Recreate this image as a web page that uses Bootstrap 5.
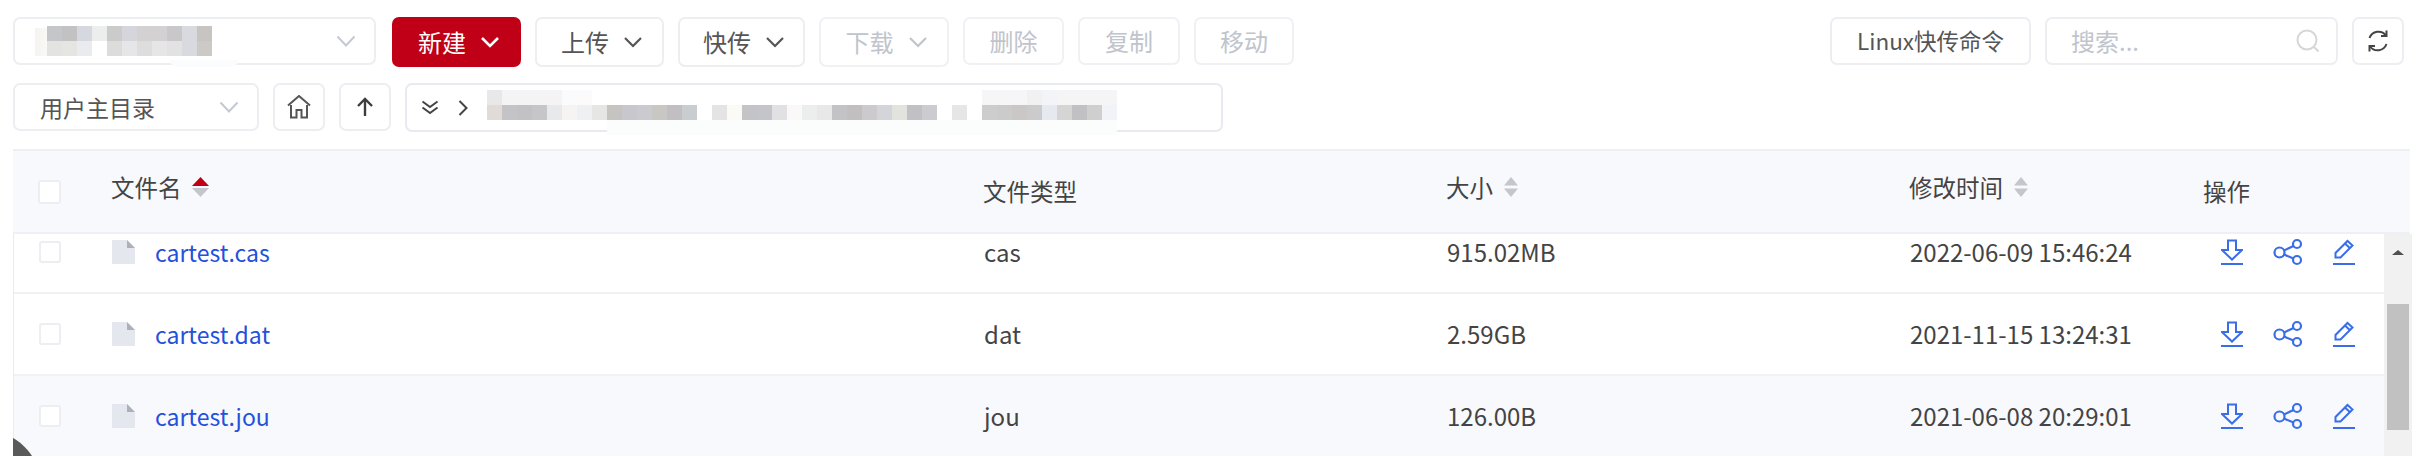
<!DOCTYPE html>
<html lang="zh-CN">
<head>
<meta charset="utf-8">
<title>文件管理</title>
<link href="https://cdn.jsdelivr.net/npm/bootstrap@5.3.0/dist/css/bootstrap.min.css" rel="stylesheet">
<style>
html,body{height:460px;overflow:hidden;background:#fff}
body{font-family:"Noto Sans CJK SC","Liberation Sans",sans-serif;font-size:24px;color:#444}
.page{padding:17px 17px 0 13px}
.bar{align-items:flex-start}
.tb{--bs-btn-border-color:#eceef2;height:48px;padding:0;border:2px solid #eceef2;border-radius:7px;font-size:24px;color:#555;background:#fff;display:flex;align-items:center;justify-content:center;gap:14px}
.tb.tall{height:50px;padding-left:5px}
.tb.off,.tb.off:disabled{color:#c0c4cc;opacity:1;border-color:#f0f1f5;background:#fff}
.tb.new{background:#c00017;border-color:#c00017;color:#fff}
.tb.w-linux{font-size:22.5px}
.w-new,.w-up{width:129px}.w-fast{width:127px}.w-down{width:130px}.w-del{width:101px}.w-copy{width:102px}.w-move{width:100px}
.w-linux{width:201px}.w-refresh{width:52px}.w-home{width:52px}
.g16{margin-left:16px}.g14{margin-left:14px}
.sel{height:48px;border:2px solid #eceef2;border-radius:7px;background:#fff;display:flex;align-items:center;justify-content:space-between}
.sel-a{width:363px;padding:0 18px 0 20px;position:relative}
.sel-b{width:246px;padding:0 18px 0 25px;font-size:23px;color:#555}
.row2{margin-top:16px}
.pathbox{width:818px;height:49px;border:2px solid #e9eaf0;border-radius:7px;display:flex;align-items:center;padding-left:14px;gap:19px}
.blur-a{width:192px;height:36px;margin-top:6px;flex:none;background:
 linear-gradient(90deg,#c5c6ca 0 15px,#c2c2c3 0 30px,#d5d8df 0 45px,#eceeed 0 60px,#cbcbcb 0 75px,#d5d6db 0 90px,#d3d1d1 0 120px,#c8c8ca 0 135px,#d9dadf 0 150px,#c7c4c1 0 165px) 12px 0/165px 15px no-repeat,
 linear-gradient(90deg,#e3e4e2 0 15px,#e5e6e2 0 30px,#e9ebef 0 45px,#fff 0 60px,#dcdcdc 0 75px,#e6e6e8 0 90px,#dedddd 0 105px,#e6e6e6 0 120px,#e2e2e2 0 135px,#d9dadf 0 150px,#cccac6 0 165px) 12px 15px/165px 15px no-repeat,
 linear-gradient(90deg,#f6f4f1,#f9f9f7) 0 2px/12px 28px no-repeat}
.wash{position:absolute;left:155px;top:41px;width:68px;height:7px;background:#fbfcfe;border-radius:0 0 12px 12px}
.blur-b{width:630px;height:45px;margin-top:5px;flex:none;align-self:flex-start;background:
 linear-gradient(90deg,#e0dbd6 0 15px,#c4c4c8 0 30px,#c2c1c3 0 45px,#c6c6ca 0 60px,#e8e9eb 0 75px,#f5f4f2 0 90px,#eff0f2 0 105px,#e6e6e4 0 120px,#c6c4c1 0 135px,#c8c7cd 0 150px,#cbcbcf 0 165px,#c9c7c4 0 180px,#c2bfc2 0 195px,#cacdd0 0 210px,#fff 0 225px,#e4e4e4 0 240px,#fbfaf6 0 255px,#c4c4c8 0 270px,#c4c5cb 0 285px,#e1e1e4 0 300px,#faf9f7 0 315px,#eceded 0 330px,#e8e8e9 0 345px,#c3c3c6 0 360px,#c1bfc0 0 375px,#cdcacd 0 390px,#d4d5da 0 405px,#e2e2de 0 420px,#c1c0c4 0 435px,#ccccd0 0 450px,#fff 0 465px,#e6e6e6 0 480px,#fff 0 495px,#cdcdcd 0 510px,#cbcbcb 0 525px,#cbc7c6 0 540px,#cbcbcd 0 555px,#e6e9f0 0 570px,#d5d5d3 0 585px,#c1c1c4 0 600px,#cfcfcd 0 615px,#f2f3f8 0 630px) 0 15px/630px 15px no-repeat,
 linear-gradient(90deg,#e8e8e8 0 15px,#f4f4f4 0 75px,#fbfbfc 0 105px,#fff 0 495px,#f6f6f6 0 540px,#f1f1f1 0 555px,#f3f4f8 0 570px,#f5f5f5 0 615px) 0 0/630px 15px no-repeat,
 linear-gradient(90deg,transparent 0 120px,#fbfcfc 0 510px) 0 30px/630px 15px no-repeat}
.srch{width:293px;height:48px;border:2px solid #eceef2;border-radius:7px;display:flex;align-items:center;padding:0 16px 0 24px}
.srch input{border:0;outline:0;padding:0;min-width:0;flex:1;font-size:24px;background:transparent}
.srch input::placeholder{color:#c0c4cc}
.tbl-wrap{margin-top:17px;position:relative;width:2399px}
.tbl{table-layout:fixed;margin:0;--bs-table-bg:transparent;--bs-table-color:#444;border-collapse:separate;border-spacing:0}
.tbl td,.tbl th{padding:0 0 0 13px;vertical-align:middle;font-weight:400;border:0;line-height:1.4}
.tbl td:first-child,.tbl th:first-child{padding-left:25px}
.c1{width:85px}.c2{width:872px}.c3,.c4{width:463px}.c5{width:294px}.c6{width:193px}.c7{width:27px}
.head{width:2397px;background:#f8f9fd;border-top:2px solid #eeeff2}
.head th{height:83px;border-bottom:2px solid #eef0f5;color:#444;font-size:23.5px}
.head .sorted{padding-bottom:8px}
.sortwrap{display:inline-flex;align-items:center;gap:10px}
.view{height:222px;overflow:hidden;display:flex}
.clip{width:2371px;height:222px;overflow:hidden;border-left:1px solid #e9ebf0;flex:none}
.body{width:2370px;margin-top:-22px}
.body td{height:82px;border-bottom:2px solid #f0f1f5;letter-spacing:0}
.body tr.alt{background:#f8f9fd}
.ck{display:block;width:22px;height:22px;border:2px solid #eceef2;border-radius:3px;background:#fff}
.head .ck{width:23px;height:24px}
.fname{display:flex;align-items:center;gap:20px}
.fname a{color:#2450dc;text-decoration:none;font-size:23px}
.acts{display:flex;gap:30px;padding-left:17px;align-items:center}
.sb{width:28px;height:222px;background:#f1f1f1;flex:none;margin-left:0;padding:0 3px}
.sb-up{display:block;height:70px}
.sb-th{height:126px;background:#c1c1c1}
.corner{position:absolute;left:0;bottom:0}
</style>
</head>
<body>
<div class="page">
  <div class="d-flex bar">
    <div class="sel sel-a">
      <div class="blur-a"></div><div class="wash"></div>
      <svg width="20" height="12" viewBox="0 0 20 12"><path d="M1.5 1.5 10 10.5 18.5 1.5" fill="none" stroke="#c4cad3" stroke-width="2"/></svg>
    </div>
    <button type="button" class="btn tb tall new w-new g16">新建<svg width="20" height="12" viewBox="0 0 20 12"><path d="M2 2l8 8 8-8" fill="none" stroke="#fff" stroke-width="2.6"/></svg></button>
    <button type="button" class="btn tb tall w-up g14">上传<svg width="20" height="12" viewBox="0 0 20 12"><path d="M2 2l8 8 8-8" fill="none" stroke="#555" stroke-width="2.2"/></svg></button>
    <button type="button" class="btn tb tall w-fast g14">快传<svg width="20" height="12" viewBox="0 0 20 12"><path d="M2 2l8 8 8-8" fill="none" stroke="#555" stroke-width="2.2"/></svg></button>
    <button type="button" class="btn tb tall off w-down g14" disabled>下载<svg width="20" height="12" viewBox="0 0 20 12"><path d="M2 2l8 8 8-8" fill="none" stroke="#c0c4cc" stroke-width="2.2"/></svg></button>
    <button type="button" class="btn tb off w-del g14" disabled>删除</button>
    <button type="button" class="btn tb off w-copy g14" disabled>复制</button>
    <button type="button" class="btn tb off w-move g14" disabled>移动</button>
    <button type="button" class="btn tb w-linux ms-auto">Linux快传命令</button>
    <div class="srch g14">
      <input type="text" placeholder="搜索..." aria-label="搜索">
      <svg width="24" height="24" viewBox="0 0 24 24"><circle cx="11" cy="11" r="9.5" fill="none" stroke="#d6d6d6" stroke-width="2"/><path d="M18 18l4.5 4.5" stroke="#d6d6d6" stroke-width="2"/></svg>
    </div>
    <button type="button" class="btn tb w-refresh g14" aria-label="刷新">
      <svg width="24" height="24" viewBox="0 0 24 24" fill="none" stroke="#444" stroke-width="2"><path d="M3.5 9A9.5 9.5 0 0 1 20 6.5"/><path d="M20.5 15A9.5 9.5 0 0 1 4 17.5"/><path d="M20.5 1.5v5.5h-5.5"/><path d="M3.5 22.5V17h5.5"/></svg>
    </button>
  </div>
  <div class="d-flex bar row2">
    <div class="sel sel-b">用户主目录
      <svg width="20" height="12" viewBox="0 0 20 12"><path d="M1.5 1.5 10 10.5 18.5 1.5" fill="none" stroke="#c4cad3" stroke-width="2"/></svg>
    </div>
    <button type="button" class="btn tb w-home g14" aria-label="主目录">
      <svg width="24" height="24" viewBox="0 0 24 24" fill="none" stroke="#555" stroke-width="2"><path d="M1 10.5 12 1l11 9.5"/><path d="M4 10v12.5h5.5V15h5v7.5H20V10"/></svg>
    </button>
    <button type="button" class="btn tb w-home g14" aria-label="上一级">
      <svg width="16" height="20" viewBox="0 0 16 20" fill="none" stroke="#3d3d3d" stroke-width="2.4"><path d="M8 19V2"/><path d="M1 9l7-7 7 7"/></svg>
    </button>
    <div class="pathbox g14">
      <svg width="18" height="15" viewBox="0 0 18 15" fill="none" stroke="#444" stroke-width="2"><path d="M1.5 1.5 9 7 16.5 1.5"/><path d="M1.5 7.5 9 13 16.5 7.5"/></svg>
      <svg width="10" height="16" viewBox="0 0 10 16" fill="none" stroke="#444" stroke-width="2"><path d="M1.5 1 8.5 8 1.5 15"/></svg>
      <div class="blur-b"></div>
    </div>
  </div>
  <div class="tbl-wrap">
    <table class="table tbl head">
      <colgroup><col class="c1"><col class="c2"><col class="c3"><col class="c4"><col class="c5"><col class="c6"><col class="c7"></colgroup>
      <thead><tr>
        <th><span class="ck"></span></th>
        <th class="sorted"><span class="sortwrap">文件名<svg width="17" height="20" viewBox="0 0 17 20"><path d="M8.5 0 17 9H0z" fill="#c00017"/><path d="M0 11h17l-8.5 9z" fill="#c3c6cc"/></svg></span></th>
        <th>文件类型</th>
        <th class="sorted"><span class="sortwrap">大小<svg width="16" height="20" viewBox="0 0 16 20"><path d="M8 0l7 8.5H1z" fill="#c3c6cc"/><path d="M1 11.5h14L8 20z" fill="#c3c6cc"/></svg></span></th>
        <th class="sorted"><span class="sortwrap">修改时间<svg width="16" height="20" viewBox="0 0 16 20"><path d="M8 0l7 8.5H1z" fill="#c3c6cc"/><path d="M1 11.5h14L8 20z" fill="#c3c6cc"/></svg></span></th>
        <th>操作</th>
        <th></th>
      </tr></thead>
    </table>
    <div class="view">
      <div class="clip">
        <table class="table tbl body">
          <colgroup><col class="c1"><col class="c2"><col class="c3"><col class="c4"><col class="c5"><col class="c6"></colgroup>
          <tbody>
            <tr>
              <td><span class="ck"></span></td>
              <td><div class="fname"><svg width="23" height="24" viewBox="0 0 23 24"><path d="M0 0h15l8 8v16H0z" fill="#e4e8ee"/><path d="M15 0l8 8h-8z" fill="#aab1bb"/></svg><a href="#">cartest.cas</a></div></td>
              <td>cas</td><td>915.02MB</td><td>2022-06-09 15:46:24</td>
              <td><div class="acts">
                <svg width="22" height="26" viewBox="0 0 22 26" fill="none" stroke="#3a6ee8" stroke-width="2"><path d="M7 1.5h8V11h6L11 20.5 1 11h6z"/><path d="M0 25h22"/></svg>
                <svg width="30" height="28" viewBox="0 0 30 28" fill="none" stroke="#3a6ee8" stroke-width="2.2"><circle cx="6.5" cy="14.5" r="5"/><circle cx="24" cy="6" r="4"/><circle cx="24" cy="22" r="4"/><path d="M11 12.5 20.5 8M11 16.5 20.5 20.5"/></svg>
                <svg width="22" height="26" viewBox="0 0 22 26" fill="none" stroke="#3a6ee8" stroke-width="2"><path d="M2.5 18.5V14L14.5 2l5 4.5-12 12z"/><path d="M12 4.5l5 4.8"/><path d="M0 25h22"/></svg>
              </div></td>
            </tr>
            <tr>
              <td><span class="ck"></span></td>
              <td><div class="fname"><svg width="23" height="24" viewBox="0 0 23 24"><path d="M0 0h15l8 8v16H0z" fill="#e4e8ee"/><path d="M15 0l8 8h-8z" fill="#aab1bb"/></svg><a href="#">cartest.dat</a></div></td>
              <td>dat</td><td>2.59GB</td><td>2021-11-15 13:24:31</td>
              <td><div class="acts">
                <svg width="22" height="26" viewBox="0 0 22 26" fill="none" stroke="#3a6ee8" stroke-width="2"><path d="M7 1.5h8V11h6L11 20.5 1 11h6z"/><path d="M0 25h22"/></svg>
                <svg width="30" height="28" viewBox="0 0 30 28" fill="none" stroke="#3a6ee8" stroke-width="2.2"><circle cx="6.5" cy="14.5" r="5"/><circle cx="24" cy="6" r="4"/><circle cx="24" cy="22" r="4"/><path d="M11 12.5 20.5 8M11 16.5 20.5 20.5"/></svg>
                <svg width="22" height="26" viewBox="0 0 22 26" fill="none" stroke="#3a6ee8" stroke-width="2"><path d="M2.5 18.5V14L14.5 2l5 4.5-12 12z"/><path d="M12 4.5l5 4.8"/><path d="M0 25h22"/></svg>
              </div></td>
            </tr>
            <tr class="alt">
              <td><span class="ck"></span></td>
              <td><div class="fname"><svg width="23" height="24" viewBox="0 0 23 24"><path d="M0 0h15l8 8v16H0z" fill="#e4e8ee"/><path d="M15 0l8 8h-8z" fill="#aab1bb"/></svg><a href="#">cartest.jou</a></div></td>
              <td>jou</td><td>126.00B</td><td>2021-06-08 20:29:01</td>
              <td><div class="acts">
                <svg width="22" height="26" viewBox="0 0 22 26" fill="none" stroke="#3a6ee8" stroke-width="2"><path d="M7 1.5h8V11h6L11 20.5 1 11h6z"/><path d="M0 25h22"/></svg>
                <svg width="30" height="28" viewBox="0 0 30 28" fill="none" stroke="#3a6ee8" stroke-width="2.2"><circle cx="6.5" cy="14.5" r="5"/><circle cx="24" cy="6" r="4"/><circle cx="24" cy="22" r="4"/><path d="M11 12.5 20.5 8M11 16.5 20.5 20.5"/></svg>
                <svg width="22" height="26" viewBox="0 0 22 26" fill="none" stroke="#3a6ee8" stroke-width="2"><path d="M2.5 18.5V14L14.5 2l5 4.5-12 12z"/><path d="M12 4.5l5 4.8"/><path d="M0 25h22"/></svg>
              </div></td>
            </tr>
          </tbody>
        </table>
      </div>
      <div class="sb">
        <span class="sb-up"><svg width="22" height="30" viewBox="0 0 22 30"><path d="M11 10l6 5H5z" fill="#505050"/></svg></span>
        <div class="sb-th"></div>
      </div>
    </div>
    <svg class="corner" width="20" height="18" viewBox="0 0 20 18"><path d="M0 0C7 4 13 9 19 18H0z" fill="#5a5a5a"/></svg>
  </div>
</div>
<script src="https://cdn.jsdelivr.net/npm/bootstrap@5.3.0/dist/js/bootstrap.bundle.min.js"></script>
</body>
</html>
